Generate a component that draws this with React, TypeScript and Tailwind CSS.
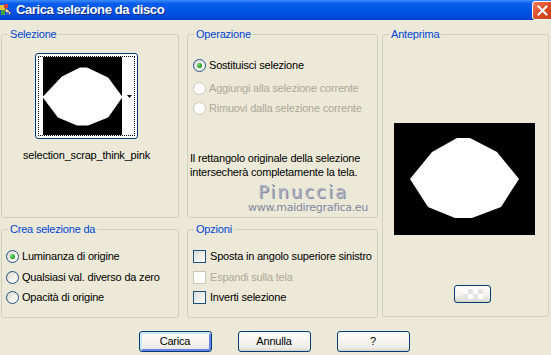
import React from "react";

const font = { fontFamily: '"Liberation Sans", Arial, sans-serif' };

function Radio({ checked = false, disabled = false }: { checked?: boolean; disabled?: boolean }) {
  return (
    <span
      className={
        "w-[13px] h-[13px] rounded-full border flex items-center justify-center shrink-0 " +
        (disabled
          ? "border-[#CAC8BB] bg-white"
          : "border-[#1C5180] bg-[linear-gradient(135deg,#DCD9CE_0%,#F4F3EE_60%,#FFFFFF_100%)]")
      }
    >
      {checked && (
        <span className="w-[5px] h-[5px] rounded-full bg-[radial-gradient(circle_at_35%_35%,#7DE07D_0%,#21A121_60%,#1A8A1A_100%)]" />
      )}
    </span>
  );
}

function Check({ disabled = false }: { disabled?: boolean }) {
  return (
    <span
      className={
        "w-[13px] h-[13px] border shrink-0 " +
        (disabled
          ? "border-[#CAC8BB] bg-white"
          : "border-[#1C5180] bg-[linear-gradient(135deg,#DCDCD7_0%,#F0F0EC_60%,#FFFFFF_100%)]")
      }
    />
  );
}

function Group({
  label,
  className,
  children,
}: {
  label: string;
  className: string;
  children?: React.ReactNode;
}) {
  return (
    <div className={"flex flex-col border border-[#D0D0BF] rounded-[3px] " + className}>
      <span className="-mt-[7px] ml-[6px] px-[2px] self-start h-[13px] leading-[13px] bg-[#ECE9D8] text-[#0046D5]">
        {label}
      </span>
      {children}
    </div>
  );
}

function XpButton({ label, primary = false }: { label: string; primary?: boolean }) {
  return (
    <button
      className={
        "w-[73px] h-[21px] border border-[#003C74] rounded-[3px] text-black text-[11px] leading-[19px] bg-[linear-gradient(180deg,#FFFFFF_0%,#F5F4F0_50%,#ECEAE3_85%,#D6D0C5_100%)] " +
        (primary ? "shadow-[inset_1px_1px_0_1px_#CEE7FF,inset_-1px_-1px_0_1px_#6982EE]" : "")
      }
    >
      {label}
    </button>
  );
}

export default function App() {
  return (
    <div
      className="w-[551px] h-[355px] bg-[#ECE9D8] flex flex-col overflow-hidden text-[11px] tracking-[-0.2px] text-black"
      style={font}
    >
      {/* Title bar */}
      <div className="h-[20px] flex items-center bg-[linear-gradient(180deg,#3D8DFC_0%,#0A5CEC_18%,#0055E5_55%,#0048D8_90%,#003FC2_100%)]">
        <svg width="13" height="14" viewBox="0 0 13 14" className="shrink-0">
          <rect x="0" y="2" width="5" height="5" fill="#E8C040" />
          <rect x="4" y="1" width="4" height="4" fill="#D04040" />
          <rect x="1" y="7" width="4" height="5" fill="#40A040" />
          <path d="M6 5 L11 10 L9 12 L5 8 Z" fill="#F0E0B0" stroke="#704020" strokeWidth="0.6" />
          <rect x="6" y="9" width="3" height="3" fill="#4060D0" />
        </svg>
        <span className="ml-[3px] text-white font-bold text-[13px] tracking-[-0.4px] [text-shadow:1px_1px_0_#0A2A8A]">
          Carica selezione da disco
        </span>
        <div className="ml-auto mr-[-2px] w-[21px] h-[19px] rounded-[3px] border border-white bg-[linear-gradient(135deg,#F08060_0%,#E0502A_45%,#C53A14_100%)] flex items-center justify-center">
          <svg width="11" height="11" viewBox="0 0 11 11">
            <path d="M1.5 1.5 L9.5 9.5 M9.5 1.5 L1.5 9.5" stroke="white" strokeWidth="2" strokeLinecap="square" />
          </svg>
        </div>
      </div>

      {/* Body */}
      <div className="flex pt-[14px] pl-[1px]">
        {/* Left column */}
        <div className="flex flex-col w-[178px]">
          <Group label="Selezione" className="h-[184px]">
            <div className="flex flex-col items-center pr-[7px]">
              <div className="mt-[12px] w-[103px] h-[86px] border border-[#003C74] rounded-[3px] bg-white p-[2px]">
                <div className="w-full h-full border border-dotted border-black flex">
                  <div className="ml-[4px] w-[79px] h-full bg-black">
                    <svg width="79" height="78" viewBox="0 0 79 78">
                      <polygon
                        points="37,11 44,11 65,21 79,40 65,60 45,68 34,68 15,60 0,40 19,20"
                        fill="white"
                        stroke="white"
                        strokeWidth="1"
                        strokeLinejoin="round"
                      />
                    </svg>
                  </div>
                  <div className="flex-1 flex items-center justify-end pr-[2px]">
                    <svg width="5" height="3" viewBox="0 0 5 3">
                      <path d="M0 0 H5 L2.5 3 Z" fill="black" />
                    </svg>
                  </div>
                </div>
              </div>
              <span className="mt-[10px] leading-[13px]">selection_scrap_think_pink</span>
            </div>
          </Group>

          <Group label="Crea selezione da" className="mt-[11px] h-[89px]">
            <div className="flex flex-col pl-[4px]">
              <div className="mt-[14px] flex items-center gap-[3px] h-[13px]">
                <Radio checked />
                <span>Luminanza di origine</span>
              </div>
              <div className="mt-[8px] flex items-center gap-[3px] h-[13px]">
                <Radio />
                <span>Qualsiasi val. diverso da zero</span>
              </div>
              <div className="mt-[7px] flex items-center gap-[3px] h-[13px]">
                <Radio />
                <span>Opacità di origine</span>
              </div>
            </div>
          </Group>
        </div>

        {/* Middle column */}
        <div className="flex flex-col w-[191px] ml-[8px]">
          <Group label="Operazione" className="h-[184px]">
            <div className="flex flex-col pl-[5px]">
              <div className="mt-[18px] flex items-center gap-[3px] h-[13px]">
                <Radio checked />
                <span>Sostituisci selezione</span>
              </div>
              <div className="mt-[10px] flex items-center gap-[3px] h-[13px] text-[#ACA899]">
                <Radio disabled />
                <span>Aggiungi alla selezione corrente</span>
              </div>
              <div className="mt-[7px] flex items-center gap-[3px] h-[13px] text-[#ACA899]">
                <Radio disabled />
                <span>Rimuovi dalla selezione corrente</span>
              </div>
              <p className="mt-[36px] ml-[-3px] leading-[14px]">
                Il rettangolo originale della selezione
                <br />
                intersecherà completamente la tela.
              </p>
              <div className="flex flex-col items-end pr-[9px] mt-[4px] tracking-normal">
                <span
                  className="text-[18px] leading-[18px] tracking-[2px] mr-[20px] text-[#AEB2C2] [text-shadow:1px_1px_0_#80869A]"
                  style={{ fontFamily: '"DejaVu Sans", Verdana, sans-serif' }}
                >
                  Pinuccia
                </span>
                <span
                  className="text-[11px] leading-[14px] tracking-[-0.3px] text-[#8088A0]"
                  style={{ fontFamily: '"DejaVu Sans", Verdana, sans-serif' }}
                >
                  www.maidiregrafica.eu
                </span>
              </div>
            </div>
          </Group>

          <Group label="Opzioni" className="mt-[11px] h-[89px]">
            <div className="flex flex-col pl-[5px]">
              <div className="mt-[14px] flex items-center gap-[4px] h-[13px]">
                <Check />
                <span>Sposta in angolo superiore sinistro</span>
              </div>
              <div className="mt-[8px] flex items-center gap-[4px] h-[13px] text-[#ACA899]">
                <Check disabled />
                <span>Espandi sulla tela</span>
              </div>
              <div className="mt-[7px] flex items-center gap-[4px] h-[13px]">
                <Check />
                <span>Inverti selezione</span>
              </div>
            </div>
          </Group>
        </div>

        {/* Right column */}
        <Group label="Anteprima" className="w-[167px] h-[283px] ml-[4px]">
          <div className="flex flex-col">
            <div className="mt-[82px] ml-[11px] w-[141px] h-[112px] bg-black">
              <svg width="141" height="112" viewBox="0 0 141 112">
                <polygon
                  points="63,15 76,15 103,29 125,56 107,84 78,95 61,95 34,84 16,56 38,29"
                  fill="white"
                />
              </svg>
            </div>
            <div className="mt-[50px] ml-[71px] w-[37px] h-[18px] border border-[#003C74] rounded-[3px] bg-[linear-gradient(180deg,#FFFFFF_0%,#F2F1EC_60%,#DAD6CC_100%)] flex items-center justify-center">
              <div className="w-[20px] h-[10px] bg-[conic-gradient(#E4E4E4_25%,#FFFFFF_0_50%,#E4E4E4_0_75%,#FFFFFF_0)] bg-[length:10px_10px]" />
            </div>
          </div>
        </Group>
      </div>

      {/* Buttons */}
      <div className="flex justify-center gap-[26px] mt-[13px] pr-[3px]">
        <XpButton label="Carica" primary />
        <XpButton label="Annulla" />
        <XpButton label="?" />
      </div>
    </div>
  );
}
